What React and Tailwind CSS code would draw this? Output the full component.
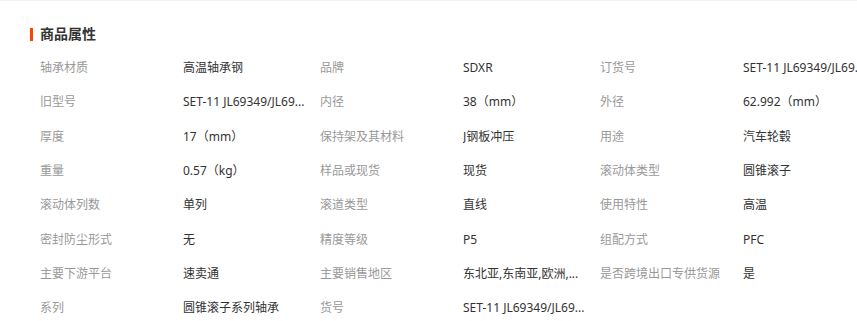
import React from "react";

const rows = [
  [["轴承材质", "高温轴承钢"], ["品牌", "SDXR"], ["订货号", "SET-11 JL69349/JL69..."]],
  [["旧型号", "SET-11 JL69349/JL69..."], ["内径", "38（mm）"], ["外径", "62.992（mm）"]],
  [["厚度", "17（mm）"], ["保持架及其材料", "J钢板冲压"], ["用途", "汽车轮毂"]],
  [["重量", "0.57（kg）"], ["样品或现货", "现货"], ["滚动体类型", "圆锥滚子"]],
  [["滚动体列数", "单列"], ["滚道类型", "直线"], ["使用特性", "高温"]],
  [["密封防尘形式", "无"], ["精度等级", "P5"], ["组配方式", "PFC"]],
  [["主要下游平台", "速卖通"], ["主要销售地区", "东北亚,东南亚,欧洲,..."], ["是否跨境出口专供货源", "是"]],
  [["系列", "圆锥滚子系列轴承"], ["货号", "SET-11 JL69349/JL69..."]],
];

export default function App() {
  return (
    <div
      className="w-[857px] h-[321px] overflow-hidden bg-white border-t border-[#f3f3f3]"
      style={{ fontFamily: "'Noto Sans', 'Noto Sans CJK SC', sans-serif" }}
    >
      <div className="mt-[24px] pl-[30px] h-[18px] flex items-center gap-[7px]">
        <div className="w-[3px] h-[13px] bg-[#ff4400]" />
        <div className="text-[14px] font-bold text-[#333] leading-[18px]">商品属性</div>
      </div>
      <div className="mt-[8px] pl-[40px] w-[900px]">
        {rows.map((row, i) => (
          <div key={i} className="flex h-[34.3px] items-center text-[12px] leading-[16px]">
            {row.map(([k, v], j) => (
              <div key={j} className="flex w-[280px] shrink-0">
                <div className="w-[143px] shrink-0 text-[#999] whitespace-nowrap">{k}</div>
                <div className="w-[130px] shrink-0 text-[#333] whitespace-nowrap overflow-hidden">{v}</div>
              </div>
            ))}
          </div>
        ))}
      </div>
    </div>
  );
}
